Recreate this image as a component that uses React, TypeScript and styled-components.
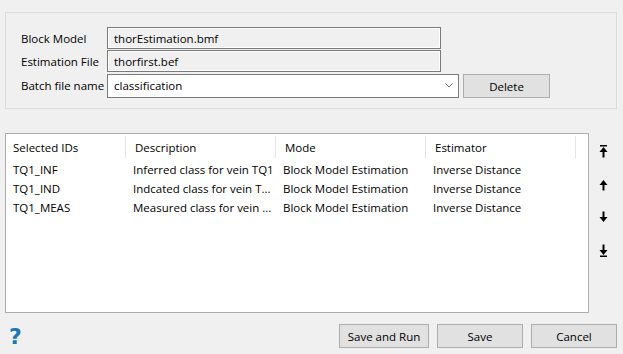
import styled, { createGlobalStyle } from 'styled-components'

const GlobalStyle = createGlobalStyle`
    body {
        margin: 0;
        background: #f0f0f0;
        font-family: "Open Sans", "Noto Sans", sans-serif;
        font-size: 11.5px;
        color: #000;
    }
`

const Dialog = styled.div`
    width: 623px;
    height: 354px;
    box-sizing: border-box;
    padding: 12px 6px 0 5px;
    display: flex;
    flex-direction: column;
    background: #f0f0f0;
`

const GroupBox = styled.div`
    height: 97px;
    box-sizing: border-box;
    border: 1px solid #dcdcdc;
    padding: 14px 0 0 14px;
`

const FormGrid = styled.div`
    display: grid;
    grid-template-columns: 87px 334px 18px 4px 87px;
    grid-template-rows: 22px 22px 24px;
    row-gap: 1px;
    align-items: center;
`

const Label = styled.div`
    grid-column: 1;
    padding-left: 1px;
    white-space: nowrap;
`

const Field = styled.div<{ $readOnly?: boolean }>`
    height: 100%;
    box-sizing: border-box;
    border: 1px solid #7a7a7a;
    background: ${p => (p.$readOnly ? '#f0f0f0' : '#fff')};
    box-shadow: ${p => (p.$readOnly ? 'inset 0 0 0 1px #fff' : 'none')};
    padding-left: 6px;
    display: flex;
    align-items: center;
    grid-column: ${p => (p.$readOnly ? '2' : '2 / 4')};
`

const ComboField = styled(Field)`
    margin-top: 1px;
    justify-content: space-between;
    padding-right: 5px;
`

const PushButton = styled.button<{ $w?: number }>`
    width: ${p => p.$w ?? 86}px;
    height: 24px;
    box-sizing: border-box;
    border: 1px solid #adadad;
    background: #e1e1e1;
    font-family: inherit;
    font-size: 11.5px;
    color: #000;
    padding: 0;
`

const DeleteButton = styled(PushButton)`
    grid-column: 5;
    margin-top: 2px;
`

const Middle = styled.div`
    display: flex;
    margin-top: 24px;
`

const Table = styled.div`
    width: 584px;
    height: 180px;
    flex-shrink: 0;
    box-sizing: border-box;
    border: 1px solid #adadad;
    background: #fff;
`

const HeaderRow = styled.div`
    display: grid;
    grid-template-columns: 120px 150px 150px 150px;
    height: 25px;
    margin-bottom: 1px;
`

const HeaderCell = styled.div`
    padding-left: 7px;
    display: flex;
    align-items: center;
    border-right: 1px solid #e5e5e5;
    margin: 2px 0 1px;
    & + & {
        padding-left: 9px;
    }
`

const Row = styled.div`
    display: grid;
    grid-template-columns: 120px 150px 150px 150px;
    height: 19px;
    align-items: center;
`

const Cell = styled.div`
    padding-left: 7px;
    white-space: nowrap;
    overflow: hidden;
`

const ArrowColumn = styled.div`
    width: 30px;
    display: flex;
    flex-direction: column;
    align-items: center;
    padding-top: 12px;
    gap: 20px;
`

const ArrowBox = styled.div`
    height: 13px;
    display: flex;
    align-items: center;
    justify-content: center;
`

const Footer = styled.div`
    display: flex;
    align-items: center;
    margin-top: 11px;
    gap: 8px;
`

const Help = styled.div`
    font-family: "DejaVu Sans", sans-serif;
    font-weight: bold;
    font-size: 22px;
    color: #1b76b3;
    margin-left: 4px;
    margin-right: auto;
    line-height: 1;
    margin-top: 1px;
`

type Arrow = 'top' | 'up' | 'down' | 'bottom'

const ArrowIcon = ({ kind }: { kind: Arrow }) => {
    const up = kind === 'top' || kind === 'up'
    const bar = kind === 'top' || kind === 'bottom'
    return (
        <svg width="9" height="13" viewBox="0 0 9 13">
            <g transform={up ? undefined : 'rotate(180 4.5 6.5)'}>
                {bar && <rect x="1" y="0" width="7" height="1.5" fill="#000" />}
                <path d="M4.5 2 L8.5 7 L5.5 7 L5.5 12.5 L3.5 12.5 L3.5 7 L0.5 7 Z" fill="#000" />
            </g>
        </svg>
    )
}

const rows = [
    ['TQ1_INF', 'Inferred class for vein TQ1', 'Block Model Estimation', 'Inverse Distance'],
    ['TQ1_IND', 'Indcated class for vein T...', 'Block Model Estimation', 'Inverse Distance'],
    ['TQ1_MEAS', 'Measured class for vein ...', 'Block Model Estimation', 'Inverse Distance'],
]

export default function App() {
    return (
        <Dialog>
            <GlobalStyle />
            <GroupBox>
                <FormGrid>
                    <Label>Block Model</Label>
                    <Field $readOnly>thorEstimation.bmf</Field>
                    <Label>Estimation File</Label>
                    <Field $readOnly>thorfirst.bef</Field>
                    <Label>Batch file name</Label>
                    <ComboField>
                        classification
                        <svg width="8" height="5" viewBox="0 0 8 5">
                            <path d="M0.5 0.5 L4 4 L7.5 0.5" fill="none" stroke="#6d6d6d" strokeWidth="1" />
                        </svg>
                    </ComboField>
                    <DeleteButton $w={87}>Delete</DeleteButton>
                </FormGrid>
            </GroupBox>
            <Middle>
                <Table>
                    <HeaderRow>
                        <HeaderCell>Selected IDs</HeaderCell>
                        <HeaderCell>Description</HeaderCell>
                        <HeaderCell>Mode</HeaderCell>
                        <HeaderCell>Estimator</HeaderCell>
                    </HeaderRow>
                    {rows.map((r, k) => (
                        <Row key={k}>
                            {r.map((c, i) => (
                                <Cell key={i}>{c}</Cell>
                            ))}
                        </Row>
                    ))}
                </Table>
                <ArrowColumn>
                    <ArrowBox><ArrowIcon kind="top" /></ArrowBox>
                    <ArrowBox><ArrowIcon kind="up" /></ArrowBox>
                    <ArrowBox><ArrowIcon kind="down" /></ArrowBox>
                    <ArrowBox><ArrowIcon kind="bottom" /></ArrowBox>
                </ArrowColumn>
            </Middle>
            <Footer>
                <Help>?</Help>
                <PushButton $w={90}>Save and Run</PushButton>
                <PushButton>Save</PushButton>
                <PushButton>Cancel</PushButton>
            </Footer>
        </Dialog>
    )
}
